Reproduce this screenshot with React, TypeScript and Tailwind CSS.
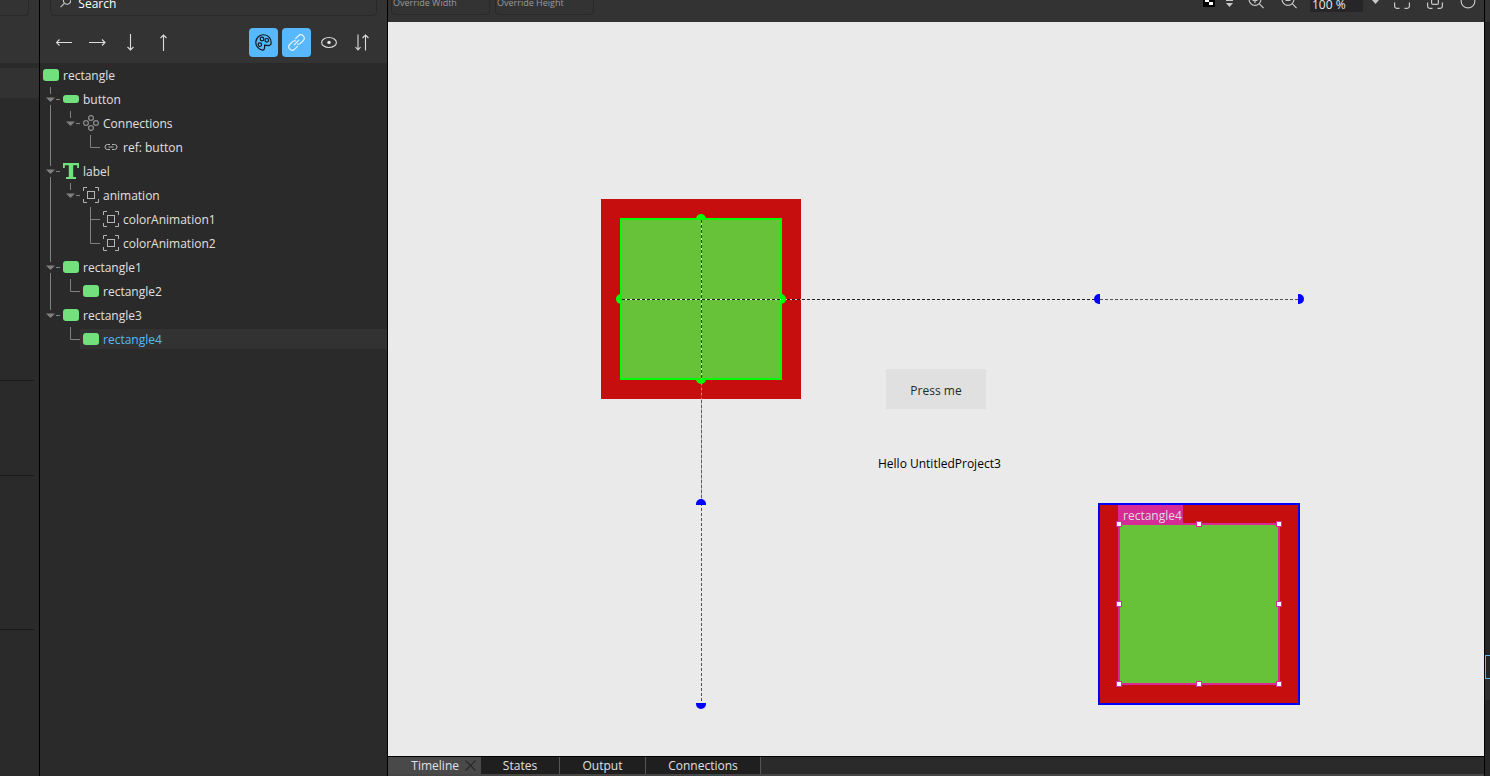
import type { ReactNode } from "react";

type Guide = "line" | "empty" | "elbow" | "tee" | "open" | "openLast";
type Icon = "rect" | "pill" | "connections" | "link" | "text" | "item";
type Row = { label: string; icon: Icon; guides: Guide[]; selected?: boolean };

const rows: Row[] = [
  { label: "rectangle", icon: "rect", guides: [] },
  { label: "button", icon: "pill", guides: ["open"] },
  { label: "Connections", icon: "connections", guides: ["line", "openLast"] },
  { label: "ref: button", icon: "link", guides: ["line", "empty", "elbow"] },
  { label: "label", icon: "text", guides: ["open"] },
  { label: "animation", icon: "item", guides: ["line", "openLast"] },
  { label: "colorAnimation1", icon: "item", guides: ["line", "empty", "tee"] },
  { label: "colorAnimation2", icon: "item", guides: ["line", "empty", "elbow"] },
  { label: "rectangle1", icon: "rect", guides: ["open"] },
  { label: "rectangle2", icon: "rect", guides: ["line", "elbow"] },
  { label: "rectangle3", icon: "rect", guides: ["openLast"] },
  { label: "rectangle4", icon: "rect", guides: ["empty", "elbow"], selected: true },
];

const guidePaths: Record<Guide, string> = {
  line: "M10.5 0V24",
  empty: "",
  elbow: "M10.5 0V12.5H20",
  tee: "M10.5 0V24M10.5 12.5H20",
  open: "M10.5 0V7M10.5 18V24M16 12.5H20",
  openLast: "M10.5 0V7M16 12.5H20",
};

function GuideCell({ kind }: { kind: Guide }) {
  return (
    <svg width="20" height="24" className="shrink-0" aria-hidden="true">
      <path d={guidePaths[kind]} fill="none" stroke="#808080" />
      {kind.startsWith("open") && <path d="M6 10.5H15L10.5 15Z" fill="#808080" />}
    </svg>
  );
}

function RowIcon({ icon }: { icon: Icon }) {
  return (
    <svg width="16" height="16" viewBox="0 0 16 16" className="shrink-0" fill="none" aria-hidden="true">
      {icon === "rect" && <rect y="2" width="16" height="12" rx="3" fill="#72e07c" />}
      {icon === "pill" && <rect y="4" width="16" height="8" rx="3" fill="#72e07c" />}
      {icon === "text" && (
        <path d="M0 0H16V5H14.2V2.2H10.2V14H13V16H3V14H5.8V2.2H1.8V5H0Z" fill="#72e07c" />
      )}
      {icon === "item" && (
        <g stroke="#b4b4b4">
          <rect x="4.5" y="4.5" width="7" height="7" />
          <path d="M0.5 4V0.5H4M12 0.5H15.5V4M15.5 12V15.5H12M4 15.5H0.5V12" />
        </g>
      )}
      {icon === "connections" && (
        <g stroke="#8a8a8a" strokeWidth="1.3">
          <circle cx="8" cy="3" r="2.4" />
          <circle cx="8" cy="13" r="2.4" />
          <circle cx="3" cy="8" r="2.4" />
          <circle cx="13" cy="8" r="2.4" />
        </g>
      )}
      {icon === "link" && (
        <path
          d="M7 5.5H4.5a2.5 2.5 0 0 0 0 5H7M9 5.5h2.5a2.5 2.5 0 0 1 0 5H9M5.5 8h5"
          stroke="#b4b4b4"
        />
      )}
    </svg>
  );
}

function ToolButton({ label, active, children }: { label: string; active?: boolean; children: ReactNode }) {
  return (
    <button
      type="button"
      aria-label={label}
      className={
        active
          ? "flex size-[29px] items-center justify-center rounded bg-[#57b9fc]"
          : "flex size-[29px] items-center justify-center rounded"
      }
    >
      <svg width="17" height="17" viewBox="0 0 17 17" fill="none" stroke="#dcdcdc" strokeWidth="1.1">
        {children}
      </svg>
    </button>
  );
}

function BarButton({ label, children }: { label: string; children: ReactNode }) {
  return (
    <button type="button" aria-label={label}>
      <svg width="16" height="16" viewBox="0 0 16 16" fill="none" stroke="#c8c8c8" strokeWidth="1.2">
        {children}
      </svg>
    </button>
  );
}

function LeftStrip() {
  return (
    <aside className="flex w-10 shrink-0 flex-col border-r border-black">
      <div className="flex h-[63px] flex-col bg-[#333333]">
        <div className="mr-[10px] h-4 rounded-br border-r border-b border-[#292929]" />
      </div>
      <div className="mt-[5px] h-[30px] bg-[#323232]" />
      <div className="mr-[5px] h-[283px] border-b border-[#1a1a1a]" />
      <div className="mr-[5px] h-[95px] border-b border-[#1a1a1a]" />
      <div className="mr-[5px] h-[154px] border-b border-[#1a1a1a]" />
    </aside>
  );
}

function Navigator() {
  return (
    <nav className="flex w-[348px] shrink-0 flex-col border-r border-black">
      <div className="flex h-[63px] flex-col justify-end overflow-hidden bg-[#333333]">
        <label className="mr-[10px] mb-3 ml-[10px] flex h-7 shrink-0 items-center gap-[7px] rounded border border-[#292929] pl-[9px]">
          <svg width="12" height="12" viewBox="0 0 12 12" fill="none" stroke="#c8c8c8" strokeWidth="1.2">
            <circle cx="7.5" cy="4.5" r="3.9" />
            <path d="M4.6 7.4L0.6 11.4" />
          </svg>
          <input
            aria-label="Search"
            placeholder="Search"
            className="w-full bg-transparent pt-[3px] text-[12px] leading-4 outline-none placeholder:text-white"
          />
        </label>
        <div className="mb-[6px] flex shrink-0 gap-1 px-[10px]">
          <ToolButton label="Move out">
            <path d="M16 8.5H0.5M3.5 5.5L0.5 8.5L3.5 11.5" />
          </ToolButton>
          <ToolButton label="Move in">
            <path d="M0 8.5H16M13 5.5L16 8.5L13 11.5" />
          </ToolButton>
          <ToolButton label="Move down">
            <path d="M8.5 0V16M5.5 13L8.5 16L11.5 13" />
          </ToolButton>
          <ToolButton label="Move up">
            <path d="M8.5 17V1M5.5 4L8.5 1L11.5 4" />
          </ToolButton>
          <div className="flex-1" />
          <ToolButton label="Color" active>
            <g stroke="#10181f" strokeWidth="1.2">
              <path d="M7.8 16.1A7.7 7.7 0 1 1 16.2 8.5C16.2 11.4 14 11.8 12.2 11.4C11.6 11.3 10.4 11 9.6 11.2V13C9.6 14.7 9.6 16.1 7.8 16.1Z" />
              <circle cx="7" cy="5" r="1.8" />
              <circle cx="11.8" cy="6.3" r="1.8" />
              <circle cx="4.9" cy="10.6" r="1.8" />
            </g>
          </ToolButton>
          <ToolButton label="References" active>
            <g stroke="#e8f5ff" strokeWidth="1.2" strokeLinecap="round">
              <path d="M6.2 10.8L10.8 6.2" />
              <path d="M7.6 4.6L10.5 1.7A3.4 3.4 0 0 1 15.3 6.5L12.4 9.4A3.4 3.4 0 0 1 9.6 10.2" />
              <path d="M9.4 12.4L6.5 15.3A3.4 3.4 0 0 1 1.7 10.5L4.6 7.6A3.4 3.4 0 0 1 7.4 6.8" />
            </g>
          </ToolButton>
          <ToolButton label="Visibility">
            <ellipse cx="8" cy="8.5" rx="7.4" ry="5" />
            <circle cx="8" cy="8.5" r="1.2" fill="#ffffff" />
          </ToolButton>
          <ToolButton label="Sort">
            <path d="M4 0.5V16M1.5 13L4 16L6.5 13M11.5 16.5V1M8.5 4L11.5 1L14.5 4" />
          </ToolButton>
        </div>
      </div>
      <ul role="tree" aria-label="Navigator">
        {rows.map((row) => (
          <li key={row.label} role="treeitem" aria-selected={!!row.selected} className="flex h-6 items-center">
            {row.guides.map((kind, i) => (
              <GuideCell key={i} kind={kind} />
            ))}
            <span
              className={
                row.selected
                  ? "flex h-5 flex-1 items-center gap-1 bg-[#323232] pl-[3px] text-[#57b9fc]"
                  : "flex h-5 flex-1 items-center gap-1 pl-[3px] text-[#e0e0e0]"
              }
            >
              <RowIcon icon={row.icon} />
              <span className="pt-[2px]">{row.label}</span>
            </span>
          </li>
        ))}
      </ul>
    </nav>
  );
}

function CanvasBar() {
  const field =
    "h-7 w-[99px] rounded border border-[#292929] bg-transparent px-px pt-[3px] text-[9px] outline-none placeholder:text-[#9a9a9a]";
  return (
    <header className="flex h-[22px] shrink-0 items-end overflow-hidden bg-[#333333]">
      <div className="flex h-[42px] w-full shrink-0 items-center justify-between pr-2 pl-[3px]">
        <div className="flex gap-[5px]">
          <input aria-label="Override width" placeholder="Override Width" className={field} />
          <input aria-label="Override height" placeholder="Override Height" className={field} />
        </div>
        <div className="flex items-center gap-[15px]">
          <div className="flex items-center gap-[11px]">
            <button type="button" aria-label="Background">
              <svg width="12" height="12" viewBox="0 0 12 12">
                <path d="M0 0H12V12H0Z" fill="#000000" />
                <path d="M2 4H6V7H2ZM6 7H10V10H6Z" fill="#ffffff" />
              </svg>
            </button>
            <svg width="7" height="12" viewBox="0 0 7 12" aria-hidden="true">
              <path d="M0 3.5H7M0 5.5H7" stroke="#c8c8c8" />
              <path d="M0 8H7L3.5 12Z" fill="#c8c8c8" />
            </svg>
          </div>
          <div className="flex items-center gap-[13px]">
            <div className="flex items-center gap-[17px]">
              <BarButton label="Zoom in">
                <circle cx="7" cy="6.5" r="5.9" />
                <path d="M11.2 10.7L15.6 15.1M4.5 7.5H9.5M7 4V10" />
              </BarButton>
              <BarButton label="Zoom out">
                <circle cx="7" cy="6.5" r="5.9" />
                <path d="M11.2 10.7L15.6 15.1M4.5 7.5H9.5" />
              </BarButton>
            </div>
            <div className="flex items-center gap-[9px]">
              <input
                aria-label="Zoom level"
                defaultValue="100 %"
                className="h-[22px] w-[53px] bg-[#262628] px-[2px] pt-[6px] text-[12px] leading-4 text-[#e8e8e8] outline-none"
              />
              <svg width="7" height="8" viewBox="0 0 7 8" aria-hidden="true">
                <path d="M0 3H7L3.5 7Z" fill="#c8c8c8" />
              </svg>
            </div>
          </div>
          <div className="flex items-center gap-[17px]">
            <BarButton label="Fit all">
              <path d="M0.6 5V3a2.4 2.4 0 0 1 2.4-2.4H5M11 0.6h2a2.4 2.4 0 0 1 2.4 2.4V5M15.4 9.5V13a2.4 2.4 0 0 1-2.4 2.4H10.5M5.5 15.4H3a2.4 2.4 0 0 1-2.4-2.4V9.5" />
            </BarButton>
            <BarButton label="Fit selection">
              <path d="M0.6 5V3a2.4 2.4 0 0 1 2.4-2.4H5M11 0.6h2a2.4 2.4 0 0 1 2.4 2.4V5M15.4 9.5V13a2.4 2.4 0 0 1-2.4 2.4H10.5M5.5 15.4H3a2.4 2.4 0 0 1-2.4-2.4V9.5" />
              <rect x="4.6" y="4.6" width="6.8" height="6.8" rx="1.5" />
            </BarButton>
            <BarButton label="Reset view">
              <path d="M12.5 3A6.8 6.8 0 1 1 3.5 3" />
            </BarButton>
          </div>
        </div>
      </div>
    </header>
  );
}

const handles = [
  "-left-1 -top-1",
  "left-[76px] -top-1",
  "-right-1 -top-1",
  "-left-1 top-[76px]",
  "-right-1 top-[76px]",
  "-left-1 -bottom-1",
  "left-[76px] -bottom-1",
  "-right-1 -bottom-1",
];

function Canvas() {
  return (
    <main className="relative flex-1 overflow-hidden bg-[#eaeaea]">
      <div className="absolute top-[177px] left-[213px] size-[200px] bg-[#c60e0e]" />
      <div className="absolute top-[196px] left-[232px] size-[162px] border-2 border-[#00ff00] bg-[#67c23a]" />
      <svg className="absolute top-0 left-0 h-full w-full" fill="none" aria-hidden="true">
        <path d="M234 277.5H413M313.5 198V377" stroke="#ffffff" strokeOpacity="0.75" />
        <path d="M234 277.5H712" stroke="#000000" strokeOpacity="0.85" strokeDasharray="3 2" />
        <path d="M712 277.5H912" stroke="#000000" strokeOpacity="0.65" strokeDasharray="3 2" />
        <path d="M313.5 198V481" stroke="#000000" strokeOpacity="0.75" strokeDasharray="3 2" />
        <path d="M313.5 358V481" stroke="#808080" strokeOpacity="0.5" />
        <path d="M313.5 481V683" stroke="#000000" strokeOpacity="0.65" strokeDasharray="3 2" />
        <g fill="#00ff00">
          <path d="M308 197a5 5 0 0 1 10 0Z" />
          <path d="M308 357a5 5 0 0 0 10 0Z" />
          <path d="M233 272a5 5 0 0 0 0 10Z" />
          <path d="M393 272a5 5 0 0 1 0 10Z" />
        </g>
        <g fill="#0000ff">
          <path d="M712 272h-1a5 5 0 0 0 0 10h1Z" />
          <path d="M910 272h1a5 5 0 0 1 0 10h-1Z" />
          <path d="M308 483v-1a5 5 0 0 1 10 0v1Z" />
          <path d="M308 681v1a5 5 0 0 0 10 0v-1Z" />
        </g>
      </svg>
      <button
        type="button"
        className="absolute top-[347px] left-[498px] h-10 w-[100px] bg-[#e0e0e0] pt-1 text-[#26282a]"
      >
        Press me
      </button>
      <p className="absolute top-[434px] left-[490px] text-black">Hello UntitledProject3</p>
      <div className="absolute top-[481px] left-[710px] size-[202px] border-2 border-[#0000ff] bg-[#c60e0e]">
        <div className="absolute top-0 left-[18px] h-5 w-[65px] bg-[#d62a96] pt-[3px] pl-[5px] text-[#dedede]">
          rectangle4
        </div>
        <div className="absolute top-[18px] left-[18px] size-[162px] border-2 border-[#d62a96] bg-[#67c23a]">
          {handles.map((place) => (
            <span key={place} className={`absolute size-[6px] border border-[#d62a96] bg-white ${place}`} />
          ))}
        </div>
      </div>
    </main>
  );
}

function BottomTabs() {
  const tab = "h-[17px] shrink-0 border-r border-[#555555] bg-[#1f1f1f]";
  return (
    <footer className="flex h-5 shrink-0 border-t border-b-2 border-t-black border-b-[#454545] bg-[#2a2a2a] text-[#e0e0e0]">
      <div className="flex h-[17px] w-[93px] shrink-0 items-center justify-end gap-[6px] bg-[#494949] pr-[5px]">
        <button type="button">Timeline</button>
        <button type="button" aria-label="Close Timeline">
          <svg width="11" height="11" viewBox="0 0 11 11" stroke="#262626" strokeWidth="1.1">
            <path d="M0.5 0.5L10.5 10.5M10.5 0.5L0.5 10.5" />
          </svg>
        </button>
      </div>
      <button type="button" className={`w-[79px] ${tab}`}>States</button>
      <button type="button" className={`w-[86px] ${tab}`}>Output</button>
      <button type="button" className={`w-[115px] ${tab}`}>Connections</button>
    </footer>
  );
}

function RightStrip() {
  return (
    <aside className="flex w-[6px] shrink-0 flex-col overflow-hidden border-l border-black bg-[#262626]">
      <div className="h-[22px] bg-[#333333]" />
      <div className="mt-[633px] h-6 w-10 border border-[#57b9fc]" />
      <div className="h-[21px] bg-[#2f2f2f]" />
    </aside>
  );
}

export default function App() {
  return (
    <div className="flex h-screen overflow-hidden bg-[#2a2a2a] font-['Open_Sans','Noto_Sans',sans-serif] text-[12px] leading-4">
      <LeftStrip />
      <Navigator />
      <div className="flex min-w-0 flex-1 flex-col">
        <CanvasBar />
        <Canvas />
        <BottomTabs />
      </div>
      <RightStrip />
    </div>
  );
}
